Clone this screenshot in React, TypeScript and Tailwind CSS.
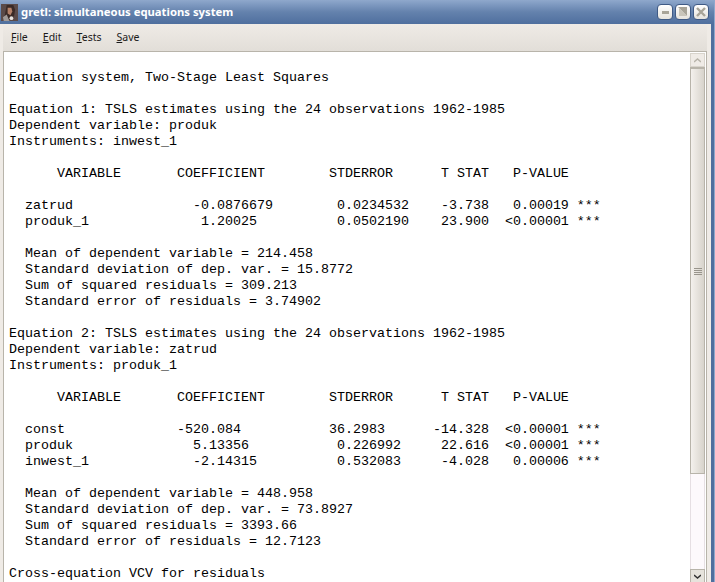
const LINES = [
  '',
  'Equation system, Two-Stage Least Squares',
  '',
  'Equation 1: TSLS estimates using the 24 observations 1962-1985',
  'Dependent variable: produk',
  'Instruments: inwest_1',
  '',
  '      VARIABLE       COEFFICIENT        STDERROR      T STAT   P-VALUE',
  '',
  '  zatrud               -0.0876679        0.0234532    -3.738   0.00019 ***',
  '  produk_1              1.20025          0.0502190    23.900  <0.00001 ***',
  '',
  '  Mean of dependent variable = 214.458',
  '  Standard deviation of dep. var. = 15.8772',
  '  Sum of squared residuals = 309.213',
  '  Standard error of residuals = 3.74902',
  '',
  'Equation 2: TSLS estimates using the 24 observations 1962-1985',
  'Dependent variable: zatrud',
  'Instruments: produk_1',
  '',
  '      VARIABLE       COEFFICIENT        STDERROR      T STAT   P-VALUE',
  '',
  '  const              -520.084           36.2983      -14.328  <0.00001 ***',
  '  produk               5.13356           0.226992     22.616  <0.00001 ***',
  '  inwest_1             -2.14315          0.532083     -4.028   0.00006 ***',
  '',
  '  Mean of dependent variable = 448.958',
  '  Standard deviation of dep. var. = 73.8927',
  '  Sum of squared residuals = 3393.66',
  '  Standard error of residuals = 12.7123',
  '',
  'Cross-equation VCV for residuals',
];

function WinButton({ children }: { children: React.ReactNode }) {
  return (
    <div className="flex h-[16px] w-[16px] items-center justify-center rounded-[4px] border border-[#3f5a85] bg-gradient-to-b from-white to-[#e6e3dc]">
      {children}
    </div>
  );
}

export default function App() {
  return (
    <div className="flex h-[582px] w-[715px] flex-col overflow-hidden border-r border-[#8fa8cc] bg-[#4f6f9e] font-['Noto_Sans',sans-serif]">
      {/* Title bar */}
      <div className="flex h-[24px] shrink-0 items-center bg-gradient-to-b from-[#8fa8cc] via-[#6482ad] to-[#4f6f9e] pl-[1px] pr-[5px]">
        <svg width="17" height="17" viewBox="0 0 18 18" className="shrink-0">
          <rect width="18" height="18" fill="#5a4a48" />
          <path d="M6 1h7l2 5-1 6-3 5H7L4 12z" fill="#3a2a26" />
          <path d="M7 4h4l1 4-2 4-3-2z" fill="#b5826a" />
          <path d="M2 14l4-3 3 7H3z" fill="#a09a98" />
          <circle cx="11" cy="15" r="2" fill="#e8e4e0" />
        </svg>
        <span className="ml-[3px] text-[11.3px] font-bold leading-none text-white">
          gretl: simultaneous equations system
        </span>
        <div className="ml-auto flex gap-[2px]">
          <WinButton>
            <div className="h-[3px] w-[7px] bg-[#a8a498]" />
          </WinButton>
          <WinButton>
            <svg width="10" height="10" viewBox="0 0 10 10">
              <path d="M0 0h9v9z" fill="#a8a498" />
              <path d="M1 1l8 8H1z" fill="#c9c5ba" />
            </svg>
          </WinButton>
          <WinButton>
            <svg width="10" height="10" viewBox="0 0 10 10">
              <path d="M1 1l8 8M9 1l-8 8" stroke="#a8a498" strokeWidth="2.4" />
            </svg>
          </WinButton>
        </div>
      </div>

      <div className="mr-[3px] flex min-h-0 flex-1 flex-col bg-[#efebe6] pl-[3px] pr-[4px]">
        {/* Menu bar */}
        <div className="flex h-[27px] shrink-0 items-center gap-[15px] bg-gradient-to-b from-[#efebe6] to-[#e2ded8] pl-[8px] text-[10.5px] text-[#1a1a1a]">
          <span><u>F</u>ile</span>
          <span><u>E</u>dit</span>
          <span><u>T</u>ests</span>
          <span><u>S</u>ave</span>
        </div>

        {/* Results text */}
        <div className="flex min-h-0 flex-1 border border-b-0 border-[#b8b4aa] bg-white">
          <pre className="min-w-0 flex-1 overflow-hidden pl-[5px] pt-[2px] font-['Liberation_Mono',monospace] text-[13.33px] leading-[16px] text-black">
            {LINES.join('\n')}
          </pre>
          <div className="mr-[1px] mt-[1px] flex w-[15px] shrink-0 flex-col bg-[#fdf9fc]">
            <div className="flex h-[14px] items-center justify-center border border-[#d8d4cc] bg-[#efebe6]">
              <svg width="7" height="5" viewBox="0 0 7 5">
                <path d="M0 4l3.5-3L7 4" fill="none" stroke="#b8b4aa" strokeWidth="1.5" />
              </svg>
            </div>
            <div className="flex h-[407px] items-center justify-center border-x border-t-2 border-b border-[#b8b4aa] bg-gradient-to-r from-[#f4f1ed] to-[#d8d4cc]">
              <div className="flex w-[8px] flex-col gap-[1px]">
                <div className="h-[1px] bg-[#99958c]" />
                <div className="h-[1px] bg-[#99958c]" />
                <div className="h-[1px] bg-[#99958c]" />
                <div className="h-[1px] bg-[#99958c]" />
              </div>
            </div>
            <div className="flex-1 border-x border-[#e6dfe3]" />
            <div className="flex h-[13px] items-center justify-center border border-b-0 border-[#b8b4aa] bg-[#e6e3dc]">
              <svg width="7" height="5" viewBox="0 0 7 5">
                <path d="M0 1l3.5 3L7 1" fill="none" stroke="#333" strokeWidth="1.5" />
              </svg>
            </div>
          </div>
        </div>
      </div>
    </div>
  );
}
